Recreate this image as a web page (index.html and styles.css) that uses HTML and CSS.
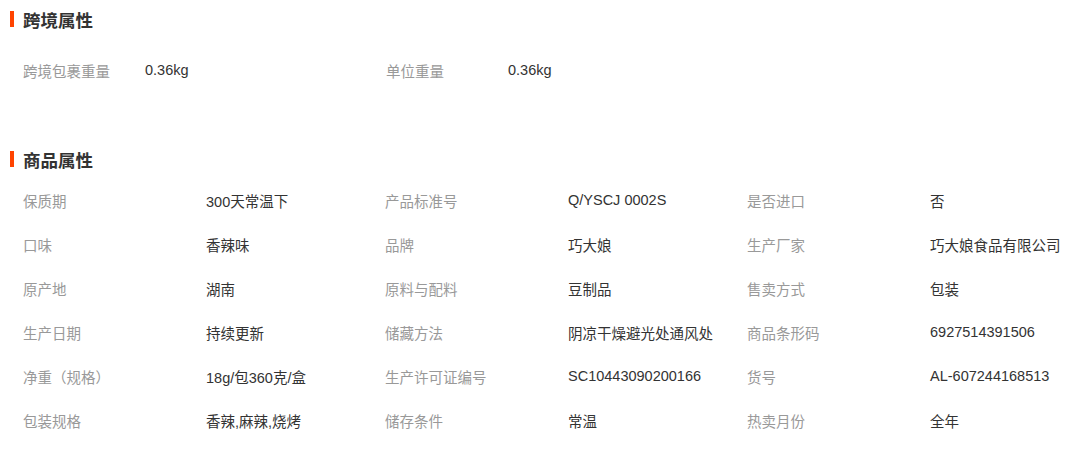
FILE: index.html
```html
<!DOCTYPE html>
<html lang="zh-CN">
<head>
    <meta charset="UTF-8">
    <meta name="viewport" content="width=device-width, initial-scale=1.0">
    <title>商品属性</title>
    <link rel="stylesheet" href="styles.css">
</head>
<body>
    <div class="attr-section cross-border">
        <h2 class="section-title">跨境属性</h2>
        <ul class="attr-list two-col">
            <li><span class="attr-label">跨境包裹重量</span><span class="attr-value">0.36kg</span></li>
            <li><span class="attr-label">单位重量</span><span class="attr-value">0.36kg</span></li>
        </ul>
    </div>

    <div class="attr-section product">
        <h2 class="section-title">商品属性</h2>
        <ul class="attr-list three-col">
            <li><span class="attr-label">保质期</span><span class="attr-value">300天常温下</span></li>
            <li><span class="attr-label">产品标准号</span><span class="attr-value">Q/YSCJ 0002S</span></li>
            <li><span class="attr-label">是否进口</span><span class="attr-value">否</span></li>
            <li><span class="attr-label">口味</span><span class="attr-value">香辣味</span></li>
            <li><span class="attr-label">品牌</span><span class="attr-value">巧大娘</span></li>
            <li><span class="attr-label">生产厂家</span><span class="attr-value">巧大娘食品有限公司</span></li>
            <li><span class="attr-label">原产地</span><span class="attr-value">湖南</span></li>
            <li><span class="attr-label">原料与配料</span><span class="attr-value">豆制品</span></li>
            <li><span class="attr-label">售卖方式</span><span class="attr-value">包装</span></li>
            <li><span class="attr-label">生产日期</span><span class="attr-value">持续更新</span></li>
            <li><span class="attr-label">储藏方法</span><span class="attr-value">阴凉干燥避光处通风处</span></li>
            <li><span class="attr-label">商品条形码</span><span class="attr-value">6927514391506</span></li>
            <li><span class="attr-label">净重（规格）</span><span class="attr-value">18g/包360克/盒</span></li>
            <li><span class="attr-label">生产许可证编号</span><span class="attr-value">SC10443090200166</span></li>
            <li><span class="attr-label">货号</span><span class="attr-value">AL-607244168513</span></li>
            <li><span class="attr-label">包装规格</span><span class="attr-value">香辣,麻辣,烧烤</span></li>
            <li><span class="attr-label">储存条件</span><span class="attr-value">常温</span></li>
            <li><span class="attr-label">热卖月份</span><span class="attr-value">全年</span></li>
        </ul>
    </div>
</body>
</html>
```

FILE: styles.css
```css
body {
    font-family: "Liberation Sans", "Noto Sans CJK SC", sans-serif;
    font-size: 14.5px;
    color: #333;
    background-color: #fff;
    margin: 0;
    padding: 0;
}

.section-title {
    display: flex;
    align-items: center;
    height: 38px;
    margin: 0;
    padding-left: 10px;
    font-size: 17.5px;
    font-weight: bold;
    color: #333;
}

.section-title::before {
    content: "";
    width: 4px;
    height: 16px;
    margin-right: 9px;
    background-color: #ff4400;
}

.attr-list {
    display: grid;
    list-style: none;
    margin: 0;
    padding: 0 0 0 23px;
}

.attr-list li {
    display: flex;
    align-items: center;
    height: 44px;
}

.attr-label {
    flex-shrink: 0;
    color: #999;
}

.attr-value {
    color: #333;
}

.cross-border .attr-list {
    padding-top: 10px;
    padding-bottom: 48px;
}

.two-col {
    grid-template-columns: repeat(2, 363px);
}

.two-col .attr-label {
    width: 122px;
}

.three-col {
    grid-template-columns: repeat(3, 362px);
}

.three-col .attr-label {
    width: 183px;
}
```
